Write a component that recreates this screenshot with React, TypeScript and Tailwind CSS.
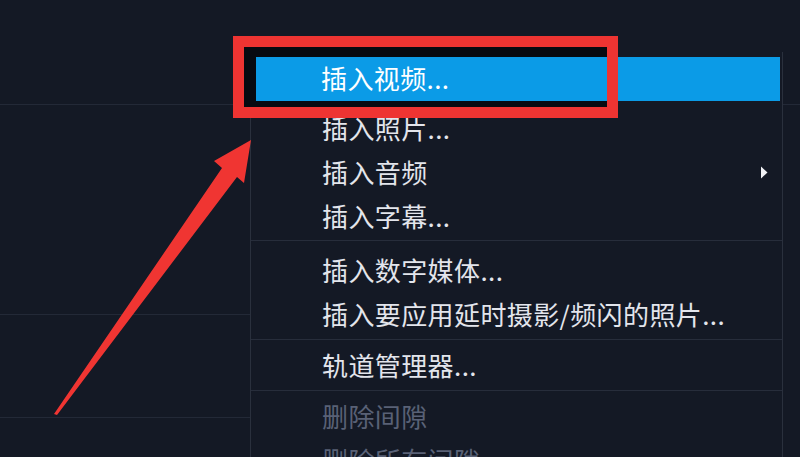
import { ReactNode } from "react";

function Row({
  children,
  h = "h-[44px]",
  disabled = false,
  sub = false,
}: {
  children: ReactNode;
  h?: string;
  disabled?: boolean;
  sub?: boolean;
}) {
  return (
    <div
      className={`${h} flex items-center pl-[71px] pr-[14px] pb-[2px] ${
        disabled ? "text-[#596176]" : "text-[#e3e5ec]"
      }`}
    >
      <span className="flex-1 whitespace-nowrap">{children}</span>
      {sub && (
        <svg width="8" height="13" viewBox="0 0 8 13" className="mt-[2px]">
          <path d="M1 0.5 L7.5 6.5 L1 12.5 Z" fill="#f1f2f5" />
        </svg>
      )}
    </div>
  );
}

function Sep({ h, pt }: { h: string; pt: string }) {
  return (
    <div className={`${h} ${pt}`}>
      <div className="h-px bg-[#272d3b]" />
    </div>
  );
}

export default function App() {
  return (
    <div
      className="relative w-[800px] h-[457px] overflow-hidden bg-[#141925] text-[26px] tracking-[0.4px]"
      style={{ fontFamily: '"Noto Sans CJK SC", "Noto Sans", sans-serif' }}
    >
      <div className="flex h-full">
        {/* timeline area on the left */}
        <div className="w-[250px] flex flex-col">
          <div className="h-[105px] border-b border-[#232937]" />
          <div className="h-[210px] border-b border-[#232937]" />
          <div className="h-[103px] border-b border-[#232937]" />
        </div>

        {/* context menu */}
        <div className="w-[533px] mt-[52px] border-l border-r border-[#2a303d] pt-[5px]">
          <div className="h-[44px] ml-[5px] mr-[2px] pb-[3px] bg-[#0b9be7] flex items-center pl-[65px] text-white whitespace-nowrap">
            插入视频...
          </div>
          <div className="h-[5px]" />
          <Row>插入照片...</Row>
          <Row sub>插入音频</Row>
          <Row>插入字幕...</Row>
          <Sep h="h-[10px]" pt="pt-[2px]" />
          <Row>插入数字媒体...</Row>
          <Row h="h-[45px]">插入要应用延时摄影/频闪的照片...</Row>
          <Sep h="h-[6px]" pt="pt-[2px]" />
          <Row>轨道管理器...</Row>
          <Sep h="h-[7px]" pt="pt-[3px]" />
          <Row disabled>删除间隙</Row>
          <Row disabled>删除所有间隙</Row>
        </div>

        <div className="flex-1 flex flex-col">
          <div className="h-[105px] border-b border-[#232937]" />
        </div>
      </div>

      {/* red annotation box */}
      <div className="absolute left-[233px] top-[36px] w-[385px] h-[82px] border-[11px] border-[#ee3432] shadow-[inset_12px_10px_0_#070a11,inset_0_-6px_0_#070a11]" />

      {/* red annotation arrow */}
      <svg
        className="absolute left-0 top-0"
        width="800"
        height="457"
        viewBox="0 0 800 457"
      >
        <polygon
          points="251,140 244,183 237,177 57,415 54,414 222,168 214,161"
          fill="#f03532"
        />
      </svg>
    </div>
  );
}
